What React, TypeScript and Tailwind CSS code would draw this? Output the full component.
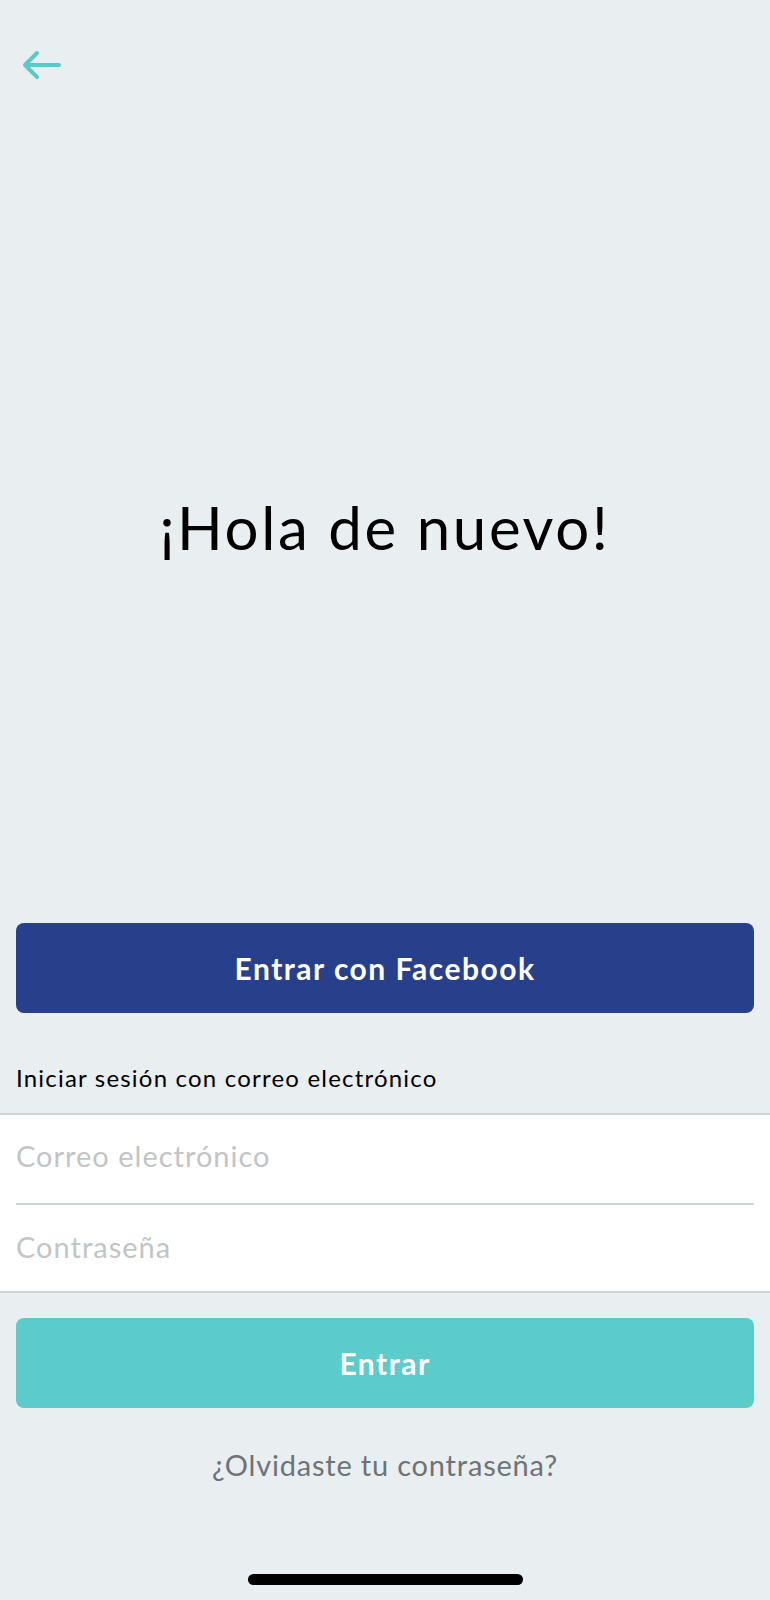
import React from "react";

export default function App() {
  return (
    <div
      className="w-full h-[1600px] bg-[#e9eef0] flex flex-col"
      style={{ fontFamily: "Lato, 'Open Sans', sans-serif" }}
    >
      <div className="pl-[21px] pt-[50px]">
        <svg width="40" height="32" viewBox="0 0 40 32" fill="none">
          <path
            d="M38 15 H4 M16 3 L4 15 L16 27"
            stroke="#5cc9c9"
            strokeWidth="4"
            strokeLinecap="round"
            strokeLinejoin="round"
          />
        </svg>
      </div>

      <h1 className="mt-[415px] h-[60px] leading-[60px] text-center text-[60px] tracking-[2.6px] text-black font-normal">
        ¡Hola de nuevo!
      </h1>

      <button className="mt-[366px] mx-4 h-[90px] rounded-[8px] bg-[#283f8c] text-white text-[30px] tracking-[1.5px] font-bold">
        Entrar con Facebook
      </button>

      <p className="mt-[51px] mb-[21px] pl-4 leading-[28px] text-[24px] tracking-[1.2px] text-black">
        Iniciar sesión con correo electrónico
      </p>

      <div className="bg-white border-t-2 border-b-2 border-[#d0d4d6]">
        <div className="mx-4 h-[90px] pb-[6px] border-b-2 border-[#d0d4d6] flex items-center">
          <span className="text-[29px] tracking-[1px] text-[#c2c4c5] font-normal">Correo electrónico</span>
        </div>
        <div className="mx-4 h-[86px] pb-[2px] flex items-center">
          <span className="text-[29px] tracking-[1px] text-[#c2c4c5] font-normal">Contraseña</span>
        </div>
      </div>

      <button className="mt-[25px] mx-4 h-[90px] rounded-[8px] bg-[#5bcbcb] text-white text-[30px] tracking-[1.5px] font-bold">
        Entrar
      </button>

      <p className="mt-[40px] leading-[34px] text-center text-[29px] tracking-[0.8px] text-[#6e7377]">
        ¿Olvidaste tu contraseña?
      </p>

      <div className="mt-auto mb-[15px] mx-auto w-[275px] h-[11px] rounded-full bg-black" />
    </div>
  );
}
